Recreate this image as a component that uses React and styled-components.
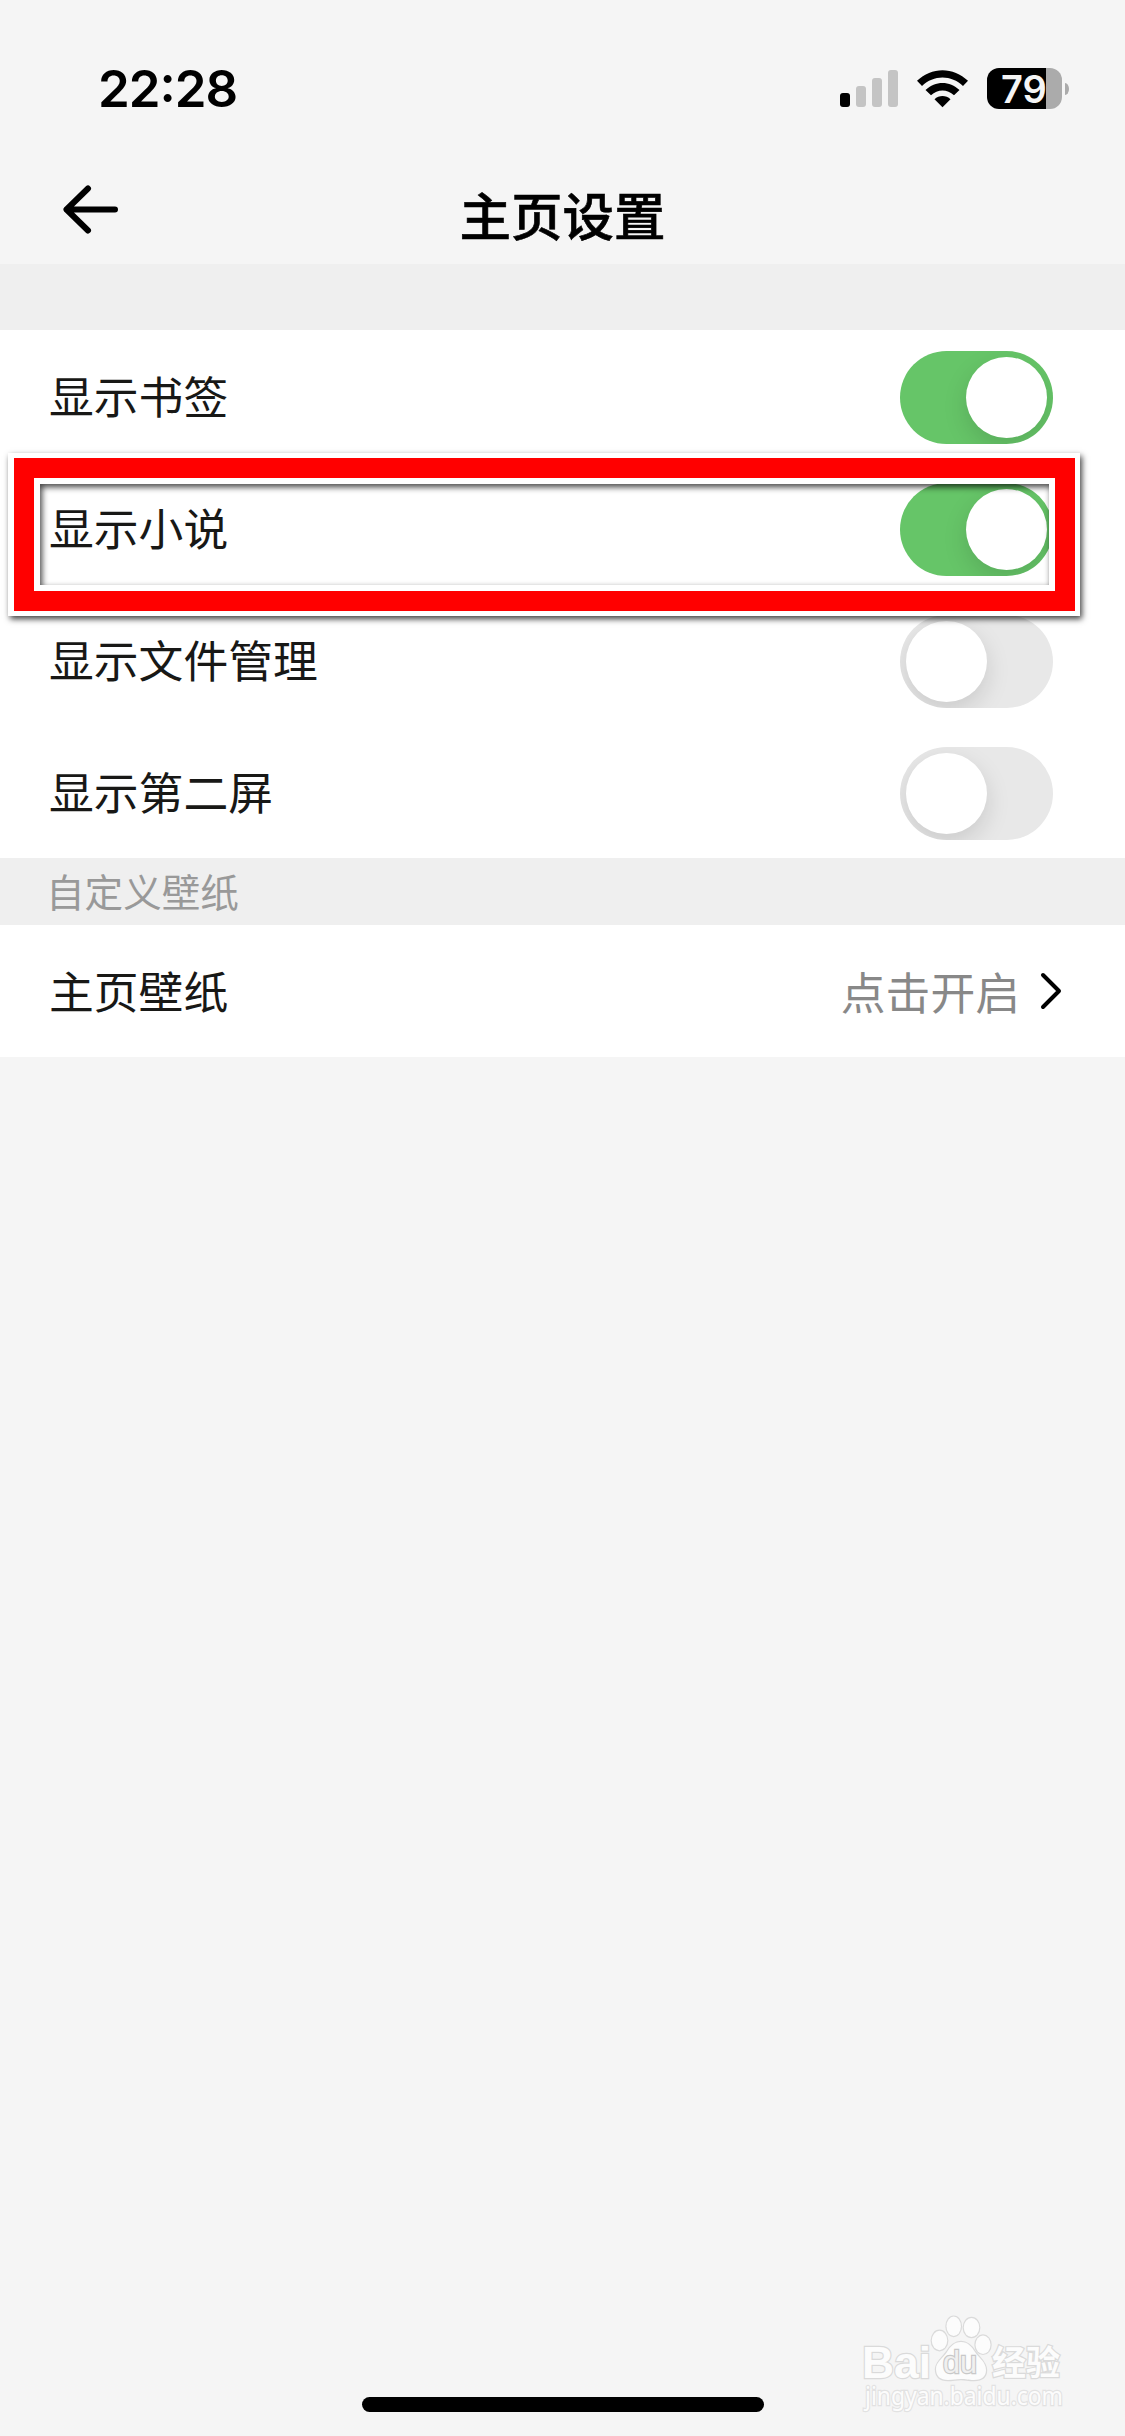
import { useState } from "react";
import styled, { createGlobalStyle } from "styled-components";

const switches = [
  { id: "bookmark", label: "显示书签", on: true },
  { id: "novel", label: "显示小说", on: true, marked: true },
  { id: "files", label: "显示文件管理", on: false },
  { id: "second", label: "显示第二屏", on: false },
];

function StatusBar() {
  return (
    <StyleStatusBar>
      <Clock>22:28</Clock>
      <StatusIcons>
        <Signal>
          <Bar $height={14} $active />
          <Bar $height={21} />
          <Bar $height={29} />
          <Bar $height={37} />
        </Signal>
        <svg width="51" height="38" viewBox="0 0 51 38">
          <path d="M0 10.8C14.5-3.4 36.5-3.4 51 10.8L46 16C34.5 4.6 16.5 4.6 5 16Z" />
          <path d="M8.5 20C18.3 10.6 32.7 10.6 42.5 20L37 25.3C30.3 19 20.7 19 14 25.3Z" />
          <path d="M17.5 29.3C22 25 29 25 33.5 29.3L25.5 37.3Z" />
        </svg>
        <Battery>
          <BatteryBody>79</BatteryBody>
          <BatteryCap />
        </Battery>
      </StatusIcons>
    </StyleStatusBar>
  );
}

function Watermark() {
  return (
    <StyleWatermark width="230" height="120" viewBox="0 0 230 120">
      <g className="shape">
        <ellipse cx="79.5" cy="40.5" rx="7.7" ry="9.7" />
        <ellipse cx="93.7" cy="26.3" rx="7.2" ry="9.7" />
        <ellipse cx="111.5" cy="27.5" rx="7.7" ry="9.5" />
        <ellipse cx="123" cy="44.7" rx="7.5" ry="9.2" />
        <path d="M101 42C108 42 112 47 115 52C119 58 126 62 126 70C126 77 121 80 114 80C108 80 106 79 101 79C96 79 93 80 88 80C80 80 76 76 76 69C76 62 83 58 87 52C90 47 94 42 101 42Z" />
      </g>
      <text className="latin" x="2" y="78" textLength="69" lengthAdjust="spacingAndGlyphs">
        Bai
      </text>
      <text className="du" x="83" y="73" textLength="34" lengthAdjust="spacingAndGlyphs">
        du
      </text>
      <text className="cjk" x="132" y="75" textLength="68" lengthAdjust="spacingAndGlyphs">
        经验
      </text>
      <text className="url" x="5" y="105" textLength="198" lengthAdjust="spacingAndGlyphs">
        jingyan.baidu.com
      </text>
    </StyleWatermark>
  );
}

function App() {
  const [items, setItems] = useState(switches);
  const toggle = (id) => {
    setItems(items.map((it) => (it.id === id ? { ...it, on: !it.on } : it)));
  };

  return (
    <Screen>
      <GlobalStyle />
      <StatusBar />
      <NavBar>
        <BackButton aria-label="返回">
          <svg width="56" height="50" viewBox="0 0 56 50">
            <path d="M26 4.5L4.5 25.5L26 46.5M4.5 25.5H53" />
          </svg>
        </BackButton>
        <Title>主页设置</Title>
      </NavBar>

      <SectionHeader $height={66} />
      {items.map((it) => (
        <Row key={it.id}>
          <Label>{it.label}</Label>
          <Switch $on={it.on} role="switch" aria-checked={it.on} onClick={() => toggle(it.id)}>
            <Thumb />
          </Switch>
          {it.marked && (
            <Marker>
              <MarkerRed>
                <MarkerInner />
              </MarkerRed>
            </Marker>
          )}
        </Row>
      ))}

      <SectionHeader $height={67}>自定义壁纸</SectionHeader>
      <Row>
        <Label>主页壁纸</Label>
        <Value>
          点击开启
          <svg width="22" height="38" viewBox="0 0 22 38">
            <path d="M3 3L19 19L3 35" />
          </svg>
        </Value>
      </Row>

      <HomeIndicator />
      <Watermark />
    </Screen>
  );
}

export default App;

const GlobalStyle = createGlobalStyle`
  body {
    margin: 0;
    background: #f5f5f5;
  }
  * {
    box-sizing: border-box;
  }
`;

const Screen = styled.div`
  position: relative;
  display: flex;
  flex-direction: column;
  width: 1125px;
  height: 2436px;
  background: #f5f5f5;
  font-family: "Noto Sans CJK SC", sans-serif;
  overflow: hidden;
`;

const StyleStatusBar = styled.div`
  display: flex;
  justify-content: space-between;
  height: 154px;
  padding: 68px 56px 0 98px;
`;

const Clock = styled.div`
  font-family: Inter, sans-serif;
  font-size: 51px;
  font-weight: 600;
  line-height: 42px;
  letter-spacing: -1px;
  font-feature-settings: "case";
`;

const StatusIcons = styled.div`
  display: flex;
  align-items: center;
  gap: 19px;
  height: 41px;
`;

const Signal = styled.div`
  display: flex;
  align-items: flex-end;
  gap: 6px;
  height: 37px;
`;

const Bar = styled.div`
  width: 10px;
  height: ${(p) => p.$height}px;
  border-radius: 3px;
  background: ${(p) => (p.$active ? "#000" : "#c4c4c4")};
`;

const Battery = styled.div`
  display: flex;
  align-items: center;
  gap: 3px;
`;

const BatteryBody = styled.div`
  width: 75px;
  height: 41px;
  padding-left: 14px;
  border-radius: 12px;
  background: linear-gradient(to right, #000 59px, #ababab 59px);
  color: #f5f5f5;
  font-family: Inter, sans-serif;
  font-size: 38px;
  font-weight: 600;
  line-height: 42px;
`;

const BatteryCap = styled.div`
  width: 4px;
  height: 12px;
  border-radius: 0 4px 4px 0 / 0 6px 6px 0;
  background: #ababab;
`;

const NavBar = styled.div`
  display: grid;
  grid-template-columns: 1fr auto 1fr;
  align-items: center;
  height: 110px;
  padding: 0 62px;
`;

const BackButton = styled.button`
  display: flex;
  width: 56px;
  padding: 0;
  border: 0;
  background: none;

  path {
    fill: none;
    stroke: #000;
    stroke-width: 6px;
    stroke-linecap: round;
    stroke-linejoin: round;
  }
`;

const Title = styled.div`
  padding-top: 9px;
  font-size: 51.5px;
  font-weight: 500;
  line-height: 60px;
  -webkit-text-stroke: 0.6px #000;
`;

const SectionHeader = styled.div`
  flex: none;
  height: ${(p) => p.$height}px;
  padding-left: 46px;
  background: #efefef;
  color: #999;
  font-size: 38.6px;
  line-height: 64px;
`;

const Row = styled.div`
  position: relative;
  flex: none;
  display: flex;
  align-items: center;
  justify-content: space-between;
  height: 132px;
  padding: 3px 72px 0 49px;
  background: #fff;
`;

const Label = styled.div`
  padding-bottom: 6px;
  color: #181816;
  font-size: 44.8px;
  line-height: 66px;
`;

const Switch = styled.div`
  display: flex;
  justify-content: ${(p) => (p.$on ? "flex-end" : "flex-start")};
  width: 153px;
  height: 93px;
  padding: 6px;
  border-radius: 47px;
  background: ${(p) => (p.$on ? "#66c568" : "#e8e8e8")};
  overflow: hidden;
`;

const Thumb = styled.div`
  width: 81px;
  height: 81px;
  border-radius: 50%;
  background: #fff;
  box-shadow: 0 9px 24px rgba(0, 0, 0, 0.13);
`;

const Value = styled.div`
  display: flex;
  align-items: center;
  gap: 20px;
  margin-right: -9px;
  padding-bottom: 4px;
  color: #888;
  font-size: 44.8px;
  line-height: 66px;

  svg {
    margin-top: 1px;
  }

  path {
    fill: none;
    stroke: #000;
    stroke-width: 4px;
    stroke-linecap: round;
    stroke-linejoin: round;
  }
`;

/* red frame drawn over the row */
const Marker = styled.div`
  position: absolute;
  z-index: 1;
  top: -9px;
  left: 8px;
  width: 1072px;
  height: 163px;
  padding: 5px 5px 5px 6px;
  box-shadow:
    inset 0 0 0 7px #fff,
    2px 3px 6px rgba(0, 0, 0, 0.75);
  pointer-events: none;
`;

const MarkerRed = styled.div`
  height: 100%;
  border: 20px solid #f00;
`;

const MarkerInner = styled.div`
  height: 100%;
  border: 6px solid #fff;
  box-shadow: inset 2px 3px 6px rgba(0, 0, 0, 0.75);
`;

const HomeIndicator = styled.div`
  width: 402px;
  height: 15px;
  margin: auto auto 24px;
  border-radius: 8px;
  background: #000;
`;

const StyleWatermark = styled.svg`
  position: absolute;
  right: 35px;
  bottom: 16px;

  .shape,
  text {
    fill: #fcfcfc;
    stroke: #dadada;
    stroke-width: 2.4px;
    paint-order: stroke;
  }
  .latin {
    font: 700 45px "Liberation Sans", sans-serif;
  }
  .du {
    font: 400 31px "Liberation Sans", sans-serif;
    fill: #f0f0f0;
    stroke: #c8c8c8;
  }
  .cjk {
    font: 700 34px "Noto Sans CJK SC", sans-serif;
  }
  .url {
    font: 400 25px "Noto Sans", sans-serif;
    stroke: #e2e2e2;
  }
`;
